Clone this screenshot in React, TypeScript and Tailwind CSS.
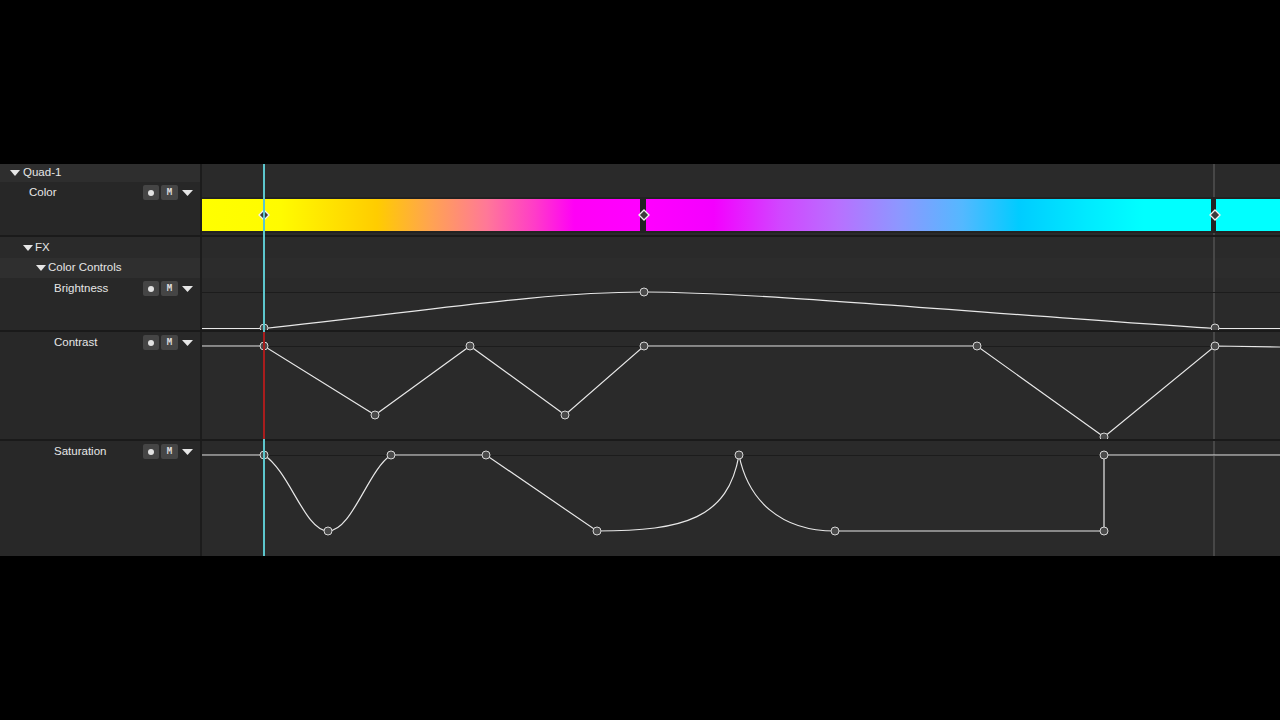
import React from 'react';

const LANE_X = 202;
const LANE_W = 1078;

function Tri({ w = 10, h = 6 }: { w?: number; h?: number }) {
  return (
    <svg width={w} height={h} viewBox={`0 0 ${w} ${h}`} className="shrink-0">
      <path d={`M0 0H${w}L${w / 2} ${h}Z`} fill="#e6e6e6" />
    </svg>
  );
}

function Controls() {
  return (
    <div className="ml-auto flex items-center gap-[2px] pr-[7px] pt-[3px]">
      <div className="flex h-[15px] w-[16px] items-center justify-center rounded-[2px] bg-[#454545]">
        <div className="h-[6px] w-[6px] rounded-full bg-[#e2e2e2]" />
      </div>
      <div className="flex h-[15px] w-[17px] items-center justify-center rounded-[2px] bg-[#454545] font-['DejaVu_Sans_Mono',monospace] text-[9px] font-bold leading-none text-[#dcdcdc]">
        M
      </div>
      <div className="ml-[2px] flex items-center">
        <Tri w={11} h={6} />
      </div>
    </div>
  );
}

function Dot({ x, y }: { x: number; y: number }) {
  return <circle cx={x} cy={y} r={4} fill="#4a4a4a" stroke="#d6d6d6" strokeWidth={1} />;
}

function Diamond({ x, y }: { x: number; y: number }) {
  return (
    <polygon
      points={`${x},${y - 5} ${x + 5},${y} ${x},${y + 5} ${x - 5},${y}`}
      fill="#3c3c3c"
      stroke="#f0f0f0"
      strokeWidth={1.3}
    />
  );
}

function Lane({ top, h, bg = 'bg-[#2a2a2a]', children }: { top: number; h: number; bg?: string; children?: React.ReactNode }) {
  return (
    <div className={`relative flex-1 overflow-hidden ${bg}`}>
      <div className="absolute bottom-0 left-[1011px] top-0 w-[2px] bg-[#474747]" />
      {children && (
        <svg
          className="absolute inset-0"
          width={LANE_W}
          height={h}
          viewBox={`${LANE_X} ${top} ${LANE_W} ${h}`}
        >
          {children}
        </svg>
      )}
    </div>
  );
}

function ColorBar() {
  return (
    <>
      <defs>
        <linearGradient id="g1" x1="202" x2="640" y1="0" y2="0" gradientUnits="userSpaceOnUse">
          <stop offset="0" stopColor="#ffff00" />
          <stop offset="0.18" stopColor="#fffb00" />
          <stop offset="0.4" stopColor="#ffcc00" />
          <stop offset="0.52" stopColor="#ffa450" />
          <stop offset="0.65" stopColor="#ff7898" />
          <stop offset="0.76" stopColor="#ff3cc8" />
          <stop offset="0.85" stopColor="#ff00f6" />
          <stop offset="1" stopColor="#ff00ff" />
        </linearGradient>
        <linearGradient id="g2" x1="646" x2="1211" y1="0" y2="0" gradientUnits="userSpaceOnUse">
          <stop offset="0" stopColor="#ff00ff" />
          <stop offset="0.12" stopColor="#f400ff" />
          <stop offset="0.24" stopColor="#d048ff" />
          <stop offset="0.34" stopColor="#b870ff" />
          <stop offset="0.45" stopColor="#8c98ff" />
          <stop offset="0.56" stopColor="#54b8ff" />
          <stop offset="0.66" stopColor="#00ccff" />
          <stop offset="0.78" stopColor="#00eaff" />
          <stop offset="0.88" stopColor="#00ffff" />
          <stop offset="1" stopColor="#00ffff" />
        </linearGradient>
      </defs>
      <rect x={202} y={197} width={1078} height={36} fill="#222222" />
      <rect x={202} y={199} width={438} height={32} fill="url(#g1)" />
      <rect x={646} y={199} width={565} height={32} fill="url(#g2)" />
      <rect x={1216} y={199} width={64} height={32} fill="#00ffff" />
      <Diamond x={264} y={215} />
      <Diamond x={644} y={215} />
      <Diamond x={1215} y={215} />
    </>
  );
}

const curve = { fill: 'none', stroke: '#e8e8e8', strokeWidth: 1.2 };
const refLine = { stroke: '#1c1c1c', strokeWidth: 1 };

function Brightness() {
  return (
    <>
      <line x1={202} x2={1280} y1={292.5} y2={292.5} {...refLine} />
      <path d="M202 328.5 L264 328.5 C420 312, 540 292, 644 292 C760 292, 1000 315, 1215 328.5 L1280 328.5" {...curve} />
      <Dot x={264} y={328} />
      <Dot x={644} y={292} />
      <Dot x={1215} y={328} />
    </>
  );
}

const contrastPts: [number, number][] = [
  [264, 346], [375, 415], [470, 346], [565, 415], [644, 346], [977, 346], [1104, 437], [1215, 346],
];

function Contrast() {
  return (
    <>
      <line x1={202} x2={1280} y1={346.5} y2={346.5} {...refLine} />
      <polyline points={`202,346 ${contrastPts.map((p) => p.join(',')).join(' ')} 1280,347`} {...curve} />
      {contrastPts.map(([x, y]) => (
        <Dot key={x} x={x} y={y} />
      ))}
    </>
  );
}

const saturationPts: [number, number][] = [
  [264, 455], [328, 531], [391, 455], [486, 455], [597, 531], [739, 455], [835, 531], [1104, 531], [1104, 455],
];

function Saturation() {
  return (
    <>
      <line x1={202} x2={1280} y1={455.5} y2={455.5} {...refLine} />
      <path
        d="M202 455 L264 455 C290 472, 305 531, 328 531 C352 531, 368 470, 391 455 L486 455 L597 531 C685 531, 728 518, 739 455 C748 500, 780 531, 835 531 L1104 531 L1104 455 L1280 455"
        {...curve}
      />
      {saturationPts.map(([x, y], i) => (
        <Dot key={i} x={x} y={y} />
      ))}
    </>
  );
}

const label = "text-[11.5px] leading-none text-[#e6e6e6]";

export default function App() {
  return (
    <div className="flex h-[720px] w-[1280px] flex-col bg-black font-['Liberation_Sans',Arial,sans-serif]">
      <div className="h-[164px] shrink-0" />
      <div className="relative flex h-[392px] shrink-0 flex-col">
        {/* Quad-1 */}
        <div className="flex h-[18px]">
          <div className="flex w-[202px] shrink-0 items-center gap-[3px] border-r-2 border-[#1c1c1c] bg-[#2e2e2e] pl-[10px]">
            <Tri />
            <span className={label}>Quad-1</span>
          </div>
          <Lane top={164} h={18} />
        </div>
        {/* Color */}
        <div className="flex h-[55px] border-b-2 border-[#1a1a1a]">
          <div className="flex w-[202px] shrink-0 items-start border-r-2 border-[#1c1c1c] bg-[#272727] pl-[29px]">
            <span className={`${label} pt-[5px]`}>Color</span>
            <Controls />
          </div>
          <Lane top={182} h={53}>
            <ColorBar />
          </Lane>
        </div>
        {/* FX */}
        <div className="flex h-[21px]">
          <div className="flex w-[202px] shrink-0 items-center gap-[2px] border-r-2 border-[#1c1c1c] bg-[#2a2a2a] pl-[23px]">
            <Tri />
            <span className={label}>FX</span>
          </div>
          <Lane top={237} h={21} />
        </div>
        {/* Color Controls */}
        <div className="flex h-[20px]">
          <div className="flex w-[202px] shrink-0 items-center gap-[2px] border-r-2 border-[#1c1c1c] bg-[#2f2f2f] pl-[36px]">
            <Tri />
            <span className={label}>Color Controls</span>
          </div>
          <Lane top={258} h={20} bg="bg-[#2c2c2c]" />
        </div>
        {/* Brightness */}
        <div className="flex h-[54px] border-b-2 border-[#1a1a1a]">
          <div className="flex w-[202px] shrink-0 items-start border-r-2 border-[#1c1c1c] bg-[#282828] pl-[54px]">
            <span className={`${label} pt-[5px]`}>Brightness</span>
            <Controls />
          </div>
          <Lane top={278} h={52}>
            <Brightness />
          </Lane>
        </div>
        {/* Contrast */}
        <div className="flex h-[109px] border-b-2 border-[#1a1a1a]">
          <div className="flex w-[202px] shrink-0 items-start border-r-2 border-[#1c1c1c] bg-[#282828] pl-[54px]">
            <span className={`${label} pt-[5px]`}>Contrast</span>
            <Controls />
          </div>
          <Lane top={332} h={107}>
            <Contrast />
          </Lane>
        </div>
        {/* Saturation */}
        <div className="flex h-[115px]">
          <div className="flex w-[202px] shrink-0 items-start border-r-2 border-[#1c1c1c] bg-[#282828] pl-[54px]">
            <span className={`${label} pt-[5px]`}>Saturation</span>
            <Controls />
          </div>
          <Lane top={441} h={115}>
            <Saturation />
          </Lane>
        </div>

        {/* playhead */}
        <div className="pointer-events-none absolute bottom-0 left-[263px] top-0 w-[1.5px] bg-[#5cc6cd]" />
        <div className="pointer-events-none absolute left-[263px] top-[168px] h-[107px] w-[1.5px] bg-[#a81d1d]" />
      </div>
      <div className="flex-1" />
    </div>
  );
}
